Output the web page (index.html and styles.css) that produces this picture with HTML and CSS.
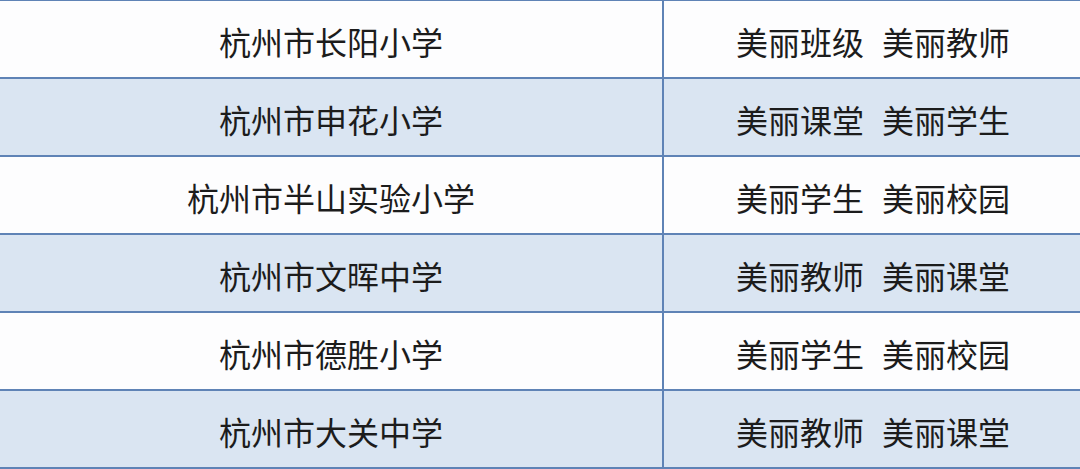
FILE: index.html
```html
<!DOCTYPE html>
<html lang="zh">
<head>
<meta charset="utf-8">
<link rel="stylesheet" href="styles.css">
</head>
<body>
<div class="table">
  <div class="row">
    <div class="cell school">杭州市长阳小学</div>
    <div class="cell awards"><span>美丽班级</span><span>美丽教师</span></div>
  </div>
  <div class="row alt">
    <div class="cell school">杭州市申花小学</div>
    <div class="cell awards"><span>美丽课堂</span><span>美丽学生</span></div>
  </div>
  <div class="row">
    <div class="cell school">杭州市半山实验小学</div>
    <div class="cell awards"><span>美丽学生</span><span>美丽校园</span></div>
  </div>
  <div class="row alt">
    <div class="cell school">杭州市文晖中学</div>
    <div class="cell awards"><span>美丽教师</span><span>美丽课堂</span></div>
  </div>
  <div class="row">
    <div class="cell school">杭州市德胜小学</div>
    <div class="cell awards"><span>美丽学生</span><span>美丽校园</span></div>
  </div>
  <div class="row alt">
    <div class="cell school">杭州市大关中学</div>
    <div class="cell awards"><span>美丽教师</span><span>美丽课堂</span></div>
  </div>
</div>
</body>
</html>
```

FILE: styles.css
```css
html, body {
  margin: 0;
  padding: 0;
  background: #ffffff;
  overflow: hidden;
}
.table {
  margin-top: -1px;
  width: 1080px;
  border-top: 2px solid #5f83b6;
}
.row {
  display: grid;
  grid-template-columns: 664px 1fr;
  height: 76px;
  border-bottom: 2px solid #5f83b6;
  background: #fdfdfe;
}
.row.alt {
  background: #dae5f2;
}
.cell {
  display: flex;
  align-items: center;
  justify-content: center;
  font-family: "Noto Sans CJK SC", "Noto Sans", sans-serif;
  font-size: 32px;
  color: #1c1c1c;
  padding-top: 3px;
}
.school {
  border-right: 2px solid #5f83b6;
}
.awards {
  gap: 18px;
  padding-left: 2px;
}
```
